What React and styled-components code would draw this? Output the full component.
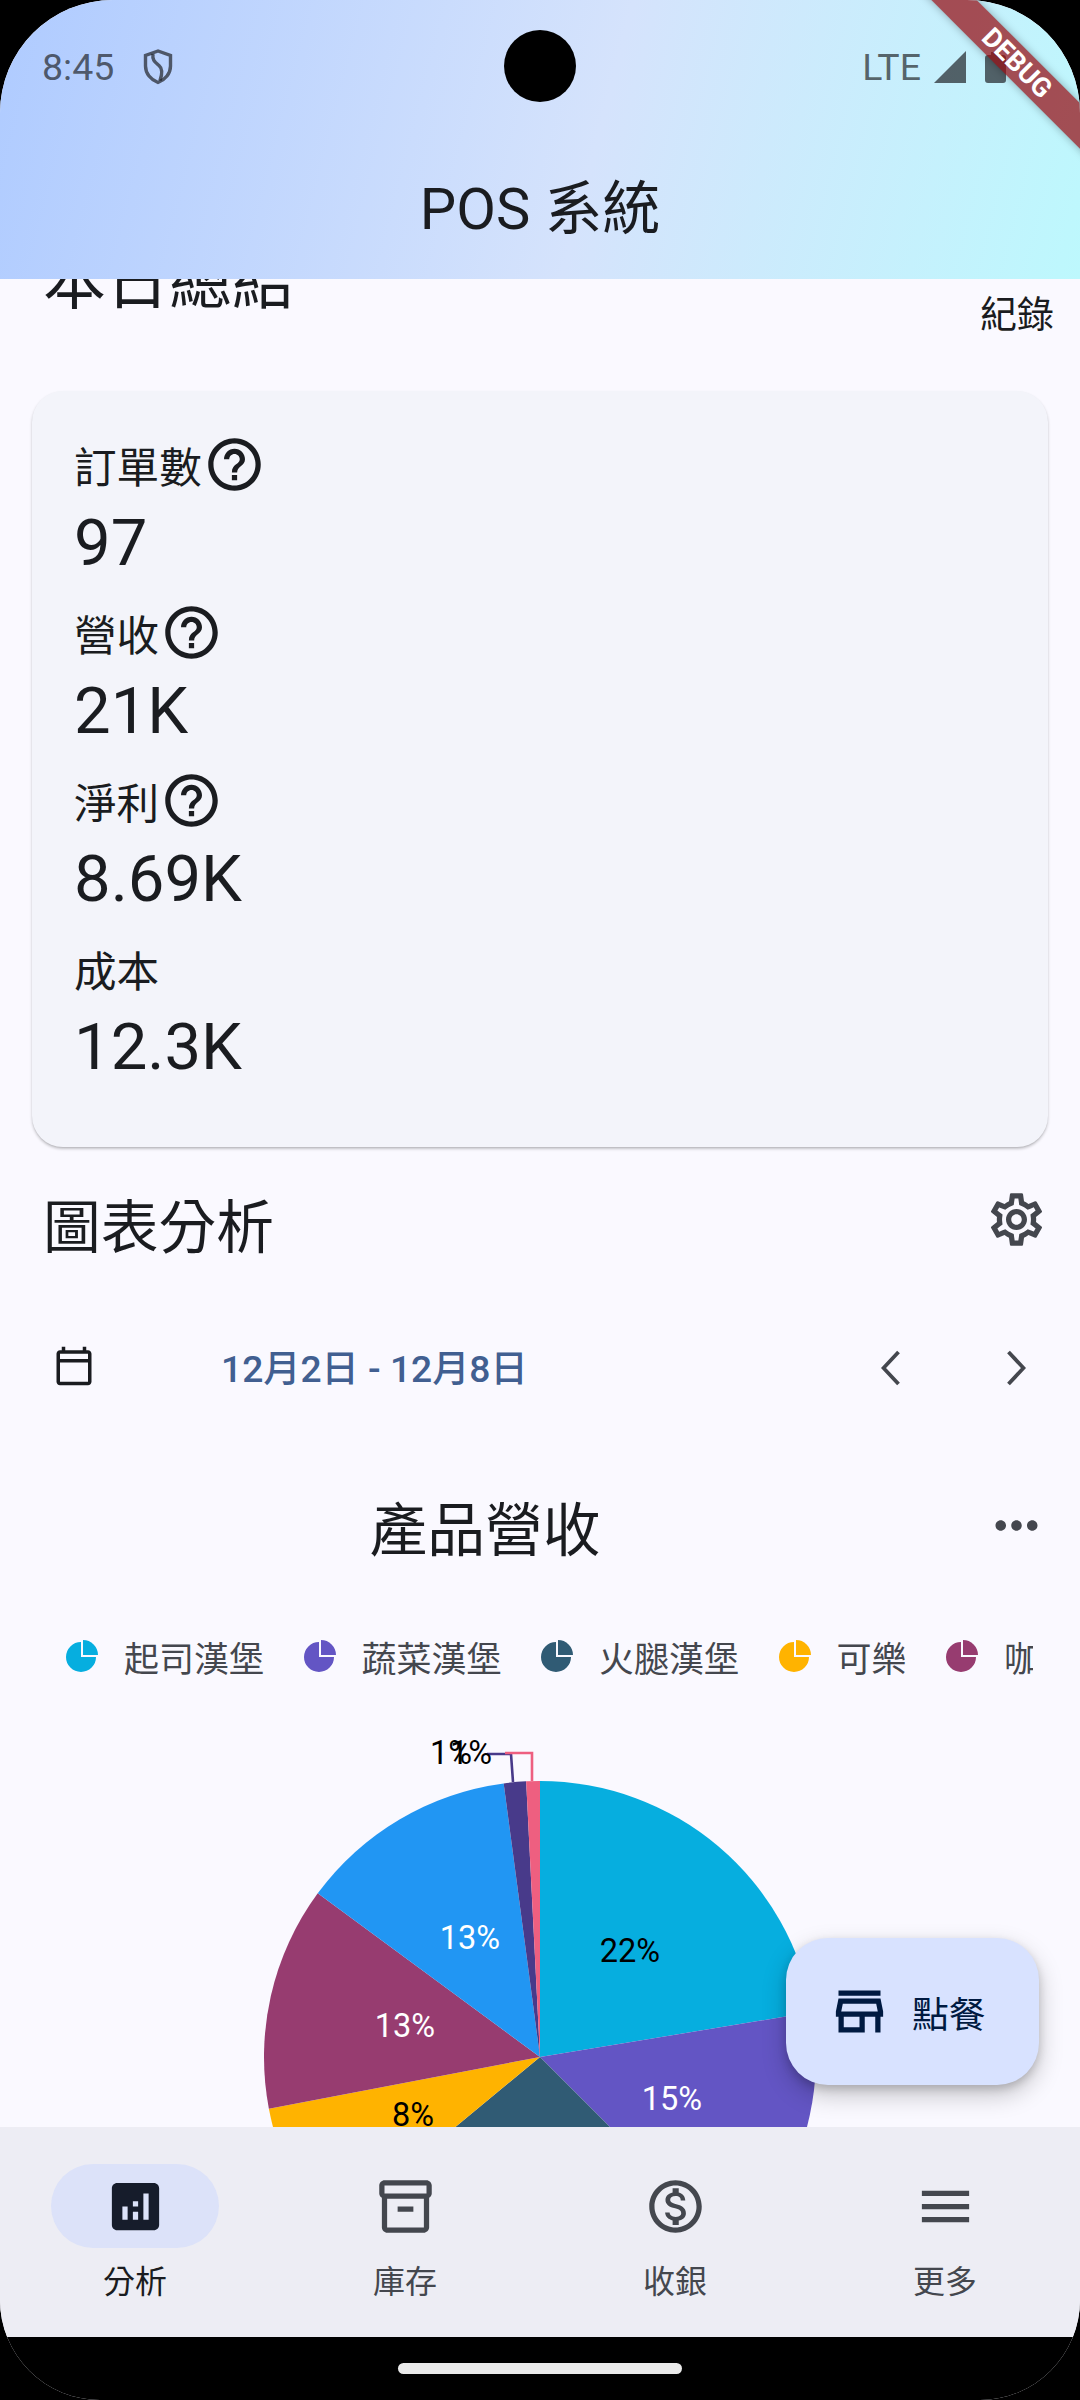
import React from "react";
import styled, { createGlobalStyle } from "styled-components";
import {
  MdHelpOutline,
  MdOutlineSettings,
  MdOutlineCalendarToday,
  MdMoreHoriz,
  MdOutlineStore,
  MdAnalytics,
  MdOutlineInventory2,
  MdOutlineMonetizationOn,
  MdMenu,
} from "react-icons/md";

const FONT = `Roboto, "Noto Sans CJK TC", sans-serif`;

const Global = createGlobalStyle`
  html, body { margin: 0; padding: 0; background: #000; }
  body { font-family: ${FONT}; }
  * { box-sizing: border-box; }
`;

const Screen = styled.div`
  position: relative;
  width: 1080px;
  height: 2400px;
  background: #faf9ff;
  border-radius: 113px 113px 100px 100px;
  overflow: hidden;
  display: flex;
  flex-direction: column;
  color: #1a1c20;
`;

const AppBar = styled.header`
  position: relative;
  z-index: 2;
  flex: none;
  height: 279px;
  background: linear-gradient(104.5deg, #afcbff 0%, #d5e3fc 55%, #bdf8fd 100%);
  display: flex;
  flex-direction: column;
`;

const StatusBar = styled.div`
  height: 134px;
  padding: 0 0 0 42px;
  display: flex;
  align-items: center;
  justify-content: space-between;
  font-size: 37.5px;
  color: rgba(26, 28, 32, 0.68);
`;

const StatusGroup = styled.div`
  display: flex;
  align-items: center;
  gap: ${(p) => p.$gap}px;
  padding-right: ${(p) => p.$right || 0}px;
`;

const Hole = styled.div`
  position: absolute;
  left: 504px;
  top: 30px;
  width: 72px;
  height: 72px;
  border-radius: 50%;
  background: #000;
`;

const Toolbar = styled.div`
  height: 139px;
  display: flex;
  align-items: center;
  justify-content: center;
  font-size: 57.75px;
`;

const Ribbon = styled.div`
  position: absolute;
  z-index: 5;
  left: 842px;
  top: 47px;
  width: 350px;
  height: 32px;
  transform: rotate(45deg);
  background: rgba(150, 12, 18, 0.72);
  box-shadow: 0 0 8px rgba(0, 0, 0, 0.3);
  color: #fff;
  font: 700 27px/32px Roboto, sans-serif;
  text-align: center;
`;

const Main = styled.main`
  flex: 1;
  min-height: 0;
  overflow: hidden;
`;

const Scroller = styled.div`
  margin-top: -39px;
`;

const SummaryHeader = styled.div`
  height: 151px;
  padding: 0 26px 0 43px;
  display: flex;
  justify-content: space-between;
  align-items: flex-start;
`;

const SummaryTitle = styled.h2`
  margin: 0;
  font-size: 63px;
  font-weight: 400;
  line-height: 84px;
`;

const TextAction = styled.div`
  margin-top: 55px;
  font-size: 37px;
  line-height: 42px;
`;

const Card = styled.section`
  margin: 0 32px;
  height: 756px;
  padding: 42px 42px 0;
  background: #f3f4fa;
  border-radius: 31px;
  box-shadow: 0 2px 3px rgba(0, 0, 0, 0.22), 0 1px 1px rgba(0, 0, 0, 0.06);
  display: flex;
  flex-direction: column;
  gap: 21px;
`;

const Metric = styled.div`
  display: flex;
  flex-direction: column;
`;

const MetricLabel = styled.div`
  height: 63px;
  display: flex;
  align-items: center;
  gap: 1px;
  font-size: 42.6px;
`;

const MetricValue = styled.div`
  height: 84px;
  line-height: 94px;
  font-size: 65.2px;
`;

const ChartHeader = styled.div`
  height: 151px;
  padding: 0 32px 0 43px;
  display: flex;
  align-items: center;
  justify-content: space-between;
  color: #44474e;
`;

const SettingsIcon = styled(MdOutlineSettings)`
  margin-top: -6px;
`;

const SectionTitle = styled.h2`
  margin: 0;
  font-size: 57.75px;
  font-weight: 400;
  color: #1a1c20;
`;

const DateRow = styled.div`
  height: 136px;
  padding: 0 54px 0 53px;
  display: flex;
  align-items: center;
  color: #44474e;
`;

const DateText = styled.div`
  margin-left: 126px;
  font-size: 37.2px;
  font-weight: 500;
  color: #415f91;
`;

const Chevrons = styled.div`
  margin-left: auto;
  margin-top: 3px;
  display: flex;
  gap: 105px;
`;

const ChartTitleRow = styled.div`
  height: 183px;
  padding-right: 32px;
  display: flex;
  align-items: center;
  color: #44474e;
`;

const ChartTitle = styled.h3`
  flex: 1;
  margin: 0;
  padding-right: 15px;
  text-align: center;
  font-size: 57.75px;
  font-weight: 400;
  color: #1a1c20;
`;

const Legend = styled.div`
  height: 78px;
  margin: 0 47px 0 66px;
  display: flex;
  align-items: center;
  gap: 39.5px;
  overflow: hidden;
  white-space: nowrap;
`;

const LegendItem = styled.div`
  flex: none;
  display: flex;
  align-items: center;
  gap: 26px;
  font-size: 35px;
  color: #44474e;
`;

const PieSvg = styled.svg`
  display: block;
`;

const PieLabel = styled.text`
  font-family: ${FONT};
  font-size: 32.5px;
  text-anchor: middle;
  dominant-baseline: central;
  fill: ${(p) => p.$fill};
`;

const Fab = styled.button`
  position: absolute;
  z-index: 3;
  left: 786px;
  top: 1938px;
  width: 253px;
  height: 147px;
  padding: 0 0 0 42px;
  border: 0;
  border-radius: 42px;
  background: #d8e2ff;
  color: #001a41;
  font-family: ${FONT};
  font-size: 36.75px;
  display: flex;
  align-items: center;
  gap: 21px;
  box-shadow: 0 10px 24px rgba(0, 0, 0, 0.22), 0 4px 8px rgba(0, 0, 0, 0.16);
`;

const Nav = styled.nav`
  position: relative;
  z-index: 2;
  flex: none;
  height: 210px;
  background: #ededf4;
  display: grid;
  grid-template-columns: repeat(4, 1fr);
`;

const NavItem = styled.div`
  padding-top: 37px;
  display: flex;
  flex-direction: column;
  align-items: center;
  color: ${(p) => (p.$active ? "#1a1c20" : "#44474e")};
`;

const NavPill = styled.div`
  width: 168px;
  height: 84px;
  border-radius: 42px;
  display: flex;
  align-items: center;
  justify-content: center;
  background: ${(p) => (p.$active ? "#dce2f9" : "transparent")};
  color: ${(p) => (p.$active ? "#161c2b" : "#44474e")};
`;

const NavLabel = styled.div`
  margin-top: 12px;
  font-size: 32px;
  line-height: 44px;
`;

const GestureBar = styled.div`
  flex: none;
  height: 63px;
  background: #000;
  display: flex;
  justify-content: center;
  padding-top: 26px;
`;

const GestureHandle = styled.div`
  width: 284px;
  height: 11px;
  border-radius: 6px;
  background: #eaeaea;
`;

const metrics = [
  { label: "訂單數", value: "97", help: true },
  { label: "營收", value: "21K", help: true },
  { label: "淨利", value: "8.69K", help: true },
  { label: "成本", value: "12.3K" },
];

const legend = [
  ["起司漢堡", "#06aedf"],
  ["蔬菜漢堡", "#6355c4"],
  ["火腿漢堡", "#305b74"],
  ["可樂", "#ffb300"],
  ["咖啡", "#973c70"],
];

const slices = [
  [22.4, "#06aedf"],
  [37.5, "#6355c4"],
  [64, "#305b74"],
  [72, "#ffb300"],
  [85.1, "#973c70"],
  [97.9, "#2196f3"],
  [99.2, "#483a8a"],
  [100, "#ee5f80"],
];

const CX = 540;
const CY = 362;
const R = 276;
const pt = (pct) => {
  const a = (pct / 100) * 2 * Math.PI;
  return `${(CX + R * Math.sin(a)).toFixed(2)} ${(CY - R * Math.cos(a)).toFixed(2)}`;
};
const slicePath = (from, to) =>
  `M${CX} ${CY}L${pt(from)}A${R} ${R} 0 ${to - from > 50 ? 1 : 0} 1 ${pt(to)}Z`;

const pieLabels = [
  ["22%", 630, 256, "#000"],
  ["15%", 672, 404, "#fff"],
  ["8%", 413, 420, "#000"],
  ["13%", 405, 331, "#fff"],
  ["13%", 470, 243, "#fff"],
  ["1%", 451, 58, "#000"],
  ["1%", 471, 58, "#000"],
];

function LegendIcon({ color }) {
  return (
    <svg width="32" height="32" viewBox="0 0 32 32" fill={color}>
      <path d="M15 2A15 15 0 1 0 30 17H15Z" />
      <path d="M17 0A15 15 0 0 1 32 15H17Z" />
    </svg>
  );
}

function Chevron({ right }) {
  return (
    <svg width="20" height="36" viewBox="0 0 20 36" fill="none" stroke="currentColor" strokeWidth="3.8">
      <path d={right ? "M2.5 2L17.5 18L2.5 34" : "M17.5 2L2.5 18L17.5 34"} />
    </svg>
  );
}

function Pie() {
  let from = 0;
  return (
    <PieSvg width="1080" height="640" viewBox="0 0 1080 640">
      {slices.map(([to, color]) => {
        const d = slicePath(from, to);
        from = to;
        return <path key={color} d={d} fill={color} />;
      })}
      <path d="M513 87L511 59H487" fill="none" stroke="#483a8a" strokeWidth="2.6" />
      <path d="M532 86V58H505" fill="none" stroke="#ee5f80" strokeWidth="2.6" />
      {pieLabels.map(([t, x, y, c]) => (
        <PieLabel key={`${t}${x}`} x={x} y={y} $fill={c}>
          {t}
        </PieLabel>
      ))}
    </PieSvg>
  );
}

export default function App() {
  return (
    <>
      <Global />
      <Screen>
        <AppBar>
          <StatusBar>
            <StatusGroup $gap={29}>
              <span>8:45</span>
              <svg width="30" height="36" viewBox="0 0 30 36" fill="none" stroke="currentColor" strokeWidth="3.4">
                <path d="M15 2L2.5 6.5V17c0 7.5 5.2 13.8 12.5 16.5C22.3 30.8 27.5 24.5 27.5 17V6.5Z" />
                <path d="M10 5c-1 6 2 8 6 11.5 3.5 3 3.5 8 1 15" />
              </svg>
            </StatusGroup>
            <StatusGroup $gap={13} $right={74}>
              <span>LTE</span>
              <svg width="32" height="32" viewBox="0 0 32 32" fill="currentColor">
                <path d="M32 0V32H0Z" />
              </svg>
              <svg width="21" height="31" viewBox="0 0 21 31" fill="currentColor" style={{ marginLeft: 6 }}>
                <path d="M6 0h9v3h3a3 3 0 0 1 3 3v22a3 3 0 0 1-3 3H3a3 3 0 0 1-3-3V6a3 3 0 0 1 3-3h3Z" />
              </svg>
            </StatusGroup>
          </StatusBar>
          <Hole />
          <Toolbar>POS 系統</Toolbar>
        </AppBar>

        <Main>
          <Scroller>
            <SummaryHeader>
              <SummaryTitle>本日總結</SummaryTitle>
              <TextAction>紀錄</TextAction>
            </SummaryHeader>
            <Card>
              {metrics.map((m) => (
                <Metric key={m.label}>
                  <MetricLabel>
                    {m.label}
                    {m.help && <MdHelpOutline size={63} />}
                  </MetricLabel>
                  <MetricValue>{m.value}</MetricValue>
                </Metric>
              ))}
            </Card>
            <ChartHeader>
              <SectionTitle>圖表分析</SectionTitle>
              <SettingsIcon size={63} />
            </ChartHeader>
            <DateRow>
              <MdOutlineCalendarToday size={42} color="#1a1c20" />
              <DateText>12月2日 - 12月8日</DateText>
              <Chevrons>
                <Chevron />
                <Chevron right />
              </Chevrons>
            </DateRow>
            <ChartTitleRow>
              <ChartTitle>產品營收</ChartTitle>
              <MdMoreHoriz size={63} />
            </ChartTitleRow>
            <Legend>
              {legend.map(([name, color]) => (
                <LegendItem key={name}>
                  <LegendIcon color={color} />
                  {name}
                </LegendItem>
              ))}
            </Legend>
            <Pie />
          </Scroller>
        </Main>

        <Fab>
          <MdOutlineStore size={63} />
          點餐
        </Fab>

        <Nav>
          <NavItem $active>
            <NavPill $active>
              <MdAnalytics size={63} />
            </NavPill>
            <NavLabel>分析</NavLabel>
          </NavItem>
          <NavItem>
            <NavPill>
              <MdOutlineInventory2 size={63} />
            </NavPill>
            <NavLabel>庫存</NavLabel>
          </NavItem>
          <NavItem>
            <NavPill>
              <MdOutlineMonetizationOn size={63} />
            </NavPill>
            <NavLabel>收銀</NavLabel>
          </NavItem>
          <NavItem>
            <NavPill>
              <MdMenu size={63} />
            </NavPill>
            <NavLabel>更多</NavLabel>
          </NavItem>
        </Nav>

        <GestureBar>
          <GestureHandle />
        </GestureBar>

        <Ribbon>DEBUG</Ribbon>
      </Screen>
    </>
  );
}
